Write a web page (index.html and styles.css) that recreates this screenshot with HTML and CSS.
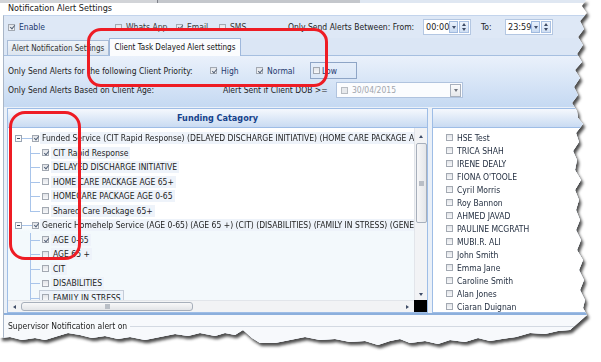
FILE: index.html
```html
<!DOCTYPE html>
<html lang="en">
<head>
  <meta charset="UTF-8">
  <title>Notification Alert Settings</title>
  <link rel="stylesheet" href="styles.css">
</head>
<body>
  <div class="shot">
    <div class="paper">
      <div class="window">
        <div class="topstrip"><span class="ts-a"></span><span class="ts-b"></span><span class="ts-c"></span></div>
        <div class="title">Notification Alert Settings</div>
        <div class="group">
          <div class="bar">
            <span class="opt w-enable"><span class="cb on"></span><span class="navy">Enable</span></span>
            <span class="opt w-wa"><span class="cb"></span>Whats App</span>
            <span class="opt w-email"><span class="cb on"></span>Email</span>
            <span class="opt w-sms"><span class="cb"></span>SMS</span>
            <span class="between">Only Send Alerts Between: From:</span>
            <span class="time"><span class="tv">00:00</span><span class="dd"><i class="tri-d"></i></span><span class="spin"><i class="tri-u"></i><i class="tri-d"></i></span></span>
            <span class="to">To:</span>
            <span class="time"><span class="tv">23:59</span><span class="dd"><i class="tri-d"></i></span><span class="spin"><i class="tri-u"></i><i class="tri-d"></i></span></span>
          </div>
          <div class="tabs">
            <span class="tab">Alert Notification Settings</span>
            <span class="tab active">Client Task Delayed Alert settings</span>
          </div>
          <div class="panel">
            <div class="prow r1">
              <span class="plabel w-prio">Only Send Alerts for the following Client Priority:</span>
              <span class="opt w-high"><span class="cb on"></span><span class="navy">High</span></span>
              <span class="opt w-normal"><span class="cb on"></span><span class="navy">Normal</span></span>
              <span class="lowbox"><span class="cb"></span><span class="navy">Low</span></span>
            </div>
            <div class="prow r2">
              <span class="plabel w-age">Only Send Alerts Based on Client Age:</span>
              <span class="plabel w-dob">Alert Sent if Client DOB &gt;=</span>
              <span class="datebox"><span class="cb"></span><span class="dv">30/04/2015</span><span class="dd dis"><i class="tri-d"></i></span></span>
            </div>
          </div>
          <div class="lists">
            <div class="box funding">
              <div class="head">Funding Catagory</div>
              <div class="body">
                <div class="tree">
                  <div class="trow parent"><span class="exp"></span><span class="stub"></span><span class="cb on"></span><span class="lbl wide">Funded Service (CIT Rapid Response) (DELAYED DISCHARGE INITIATIVE) (HOME CARE PACKAGE AGE</span></div>
                  <div class="kids">
                    <div class="trow kid"><span class="cb on"></span><span class="lbl">CIT Rapid Response</span></div>
                    <div class="trow kid"><span class="cb on"></span><span class="lbl">DELAYED DISCHARGE INITIATIVE</span></div>
                    <div class="trow kid"><span class="cb"></span><span class="lbl">HOME CARE PACKAGE AGE 65+</span></div>
                    <div class="trow kid"><span class="cb"></span><span class="lbl">HOMECARE PACKAGE AGE 0-65</span></div>
                    <div class="trow kid"><span class="cb"></span><span class="lbl">Shared Care Package 65+</span></div>
                  </div>
                  <div class="trow parent"><span class="exp"></span><span class="stub"></span><span class="cb on"></span><span class="lbl wide">Generic Homehelp Service (AGE 0-65) (AGE 65 +) (CIT) (DISABILITIES) (FAMILY IN STRESS) (GENERIC</span></div>
                  <div class="kids open">
                    <div class="trow kid"><span class="cb on"></span><span class="lbl">AGE 0-65</span></div>
                    <div class="trow kid"><span class="cb"></span><span class="lbl">AGE 65 +</span></div>
                    <div class="trow kid"><span class="cb"></span><span class="lbl">CIT</span></div>
                    <div class="trow kid"><span class="cb"></span><span class="lbl">DISABILITIES</span></div>
                    <div class="trow kid"><span class="focus"><span class="cb"></span><span class="lbl">FAMILY IN STRESS</span></span></div>
                  </div>
                </div>
                <div class="vscroll">
                  <i class="tri-u"></i>
                  <span class="vthumb"><b></b></span>
                  <span class="fill"></span>
                  <i class="tri-d"></i>
                </div>
              </div>
              <div class="hrow">
                <div class="hscroll">
                  <i class="tri-l"></i>
                  <span class="hthumb"><b></b></span>
                  <span class="fill"></span>
                  <i class="tri-r"></i>
                </div>
                <div class="corner"></div>
              </div>
            </div>
            <div class="box staff">
              <div class="head"></div>
              <div class="names">
                <div class="name"><span class="cb"></span>HSE Test</div>
                <div class="name"><span class="cb"></span>TRICA SHAH</div>
                <div class="name"><span class="cb"></span>IRENE DEALY</div>
                <div class="name"><span class="cb"></span>FIONA O'TOOLE</div>
                <div class="name"><span class="cb"></span>Cyril Morris</div>
                <div class="name"><span class="cb"></span>Roy Bannon</div>
                <div class="name"><span class="cb"></span>AHMED JAVAD</div>
                <div class="name"><span class="cb"></span>PAULINE MCGRATH</div>
                <div class="name"><span class="cb"></span>MUBI.R. ALI</div>
                <div class="name"><span class="cb"></span>John Smith</div>
                <div class="name"><span class="cb"></span>Emma Jane</div>
                <div class="name"><span class="cb"></span>Caroline Smith</div>
                <div class="name"><span class="cb"></span>Alan Jones</div>
                <div class="name"><span class="cb"></span>Ciaran Duignan</div>
              </div>
            </div>
          </div>
          <div class="foot"><span>Supervisor Notification alert on</span><span class="rule"></span></div>
        </div>
      </div>
    </div>
    <div class="mark mark-a"></div>
    <div class="mark mark-b"></div>
  </div>
</body>
</html>
```

FILE: styles.css
```css
* {
  box-sizing: border-box;
}
body {
  margin: 0;
  background: #fff;
  font-family: "DejaVu Sans Condensed", "Liberation Sans Narrow", "Liberation Sans", sans-serif;
  font-size: 8.5px;
  color: #1c1c1c;
}
.shot {
  position: relative;
  width: 601px;
  height: 362px;
  overflow: hidden;
}
.paper {
  width: 596px;
  height: 352px;
  filter: drop-shadow(2px 3px 1.5px rgba(0, 0, 0, 0.7));
}
.window {
  width: 596px;
  height: 352px;
  background: #fff;
  padding-left: 3px;
  display: flex;
  flex-direction: column;
  clip-path: polygon(0 0, 586px 0, 582px 6px, 587px 13px, 580px 21px, 584px 29px, 578px 37px, 583px 45px, 577px 54px, 582px 62px, 575px 70px, 580px 78px, 574px 87px, 578px 95px, 572px 103px, 577px 111px, 578px 118px, 583px 124px, 576px 133px, 579px 142px, 573px 151px, 577px 160px, 575px 170px, 581px 180px, 575px 190px, 579px 200px, 576px 210px, 580px 220px, 576px 230px, 581px 240px, 577px 250px, 583px 260px, 579px 270px, 584px 280px, 580px 290px, 585px 300px, 583px 308px, 587px 315px, 579px 322px, 570px 330px, 558px 331px, 545px 334px, 530px 333px, 516px 337px, 502px 339px, 490px 341px, 478px 338px, 465px 342px, 450px 340px, 438px 344px, 425px 341px, 410px 343px, 400px 339px, 390px 341px, 378px 345px, 365px 341px, 350px 342px, 335px 339px, 320px 340px, 305px 337px, 290px 340px, 275px 343px, 260px 343px, 252px 338px, 243px 330px, 235px 335px, 225px 333px, 215px 336px, 200px 333px, 188px 336px, 175px 334px, 160px 337px, 145px 340px, 130px 337px, 118px 339px, 105px 336px, 92px 338px, 80px 335px, 68px 333px, 58px 336px, 45px 340px, 35px 338px, 22px 340px, 10px 337px, 0 338px);
}

/* top */
.topstrip {
  height: 3px;
  margin-left: -3px;
  display: flex;
}
.ts-a {
  width: 157px;
  background: #d2d4d8;
}
.ts-b {
  width: 203px;
  background: #c4c7cc;
  border-left: 1px solid #7d8088;
}
.ts-c {
  flex: 1;
  background: #dfe7f2;
}
.title {
  height: 12px;
  padding-left: 5px;
  font-size: 9px;
  line-height: 11px;
  color: #1a1a1a;
}
.group {
  flex: 1;
  display: flex;
  flex-direction: column;
  border-left: 1px solid #a9b6c8;
  border-top: 1px solid #c3d4ec;
  background: #e4ecf8;
}

/* checkbox */
.cb {
  position: relative;
  flex: none;
  width: 7px;
  height: 7px;
  border: 1px solid #a3a9b2;
  background: linear-gradient(#e2e4e8, #f7f8fa);
}
.cb.on::after {
  content: "";
  position: absolute;
  left: 1.5px;
  top: -0.5px;
  width: 2px;
  height: 4px;
  border: solid #56647a;
  border-width: 0 1px 1px 0;
  transform: rotate(40deg);
}
.opt {
  display: flex;
  align-items: center;
  gap: 4px;
  flex: none;
  white-space: nowrap;
}
.navy {
  color: #1f3a70;
}

/* row 1 */
.bar {
  height: 22px;
  display: flex;
  align-items: center;
  padding-left: 4px;
  background: #dee8f6;
}
.w-enable { width: 107px; }
.w-wa { width: 61px; color: #3a3a3a; }
.w-email { width: 43px; color: #3a3a3a; }
.w-sms { width: 69px; color: #3a3a3a; }
.between {
  width: 135px;
  flex: none;
  white-space: nowrap;
}
.to {
  width: 24px;
  margin-left: 10px;
  flex: none;
}
.time {
  width: 48px;
  height: 16px;
  flex: none;
  display: flex;
  align-items: center;
  background: #fff;
  border: 1px solid #b4c7e2;
  padding: 1px;
}
.tv {
  width: 24px;
  font-size: 9px;
  padding-left: 1px;
}
.dd {
  width: 9px;
  height: 12px;
  display: flex;
  align-items: center;
  justify-content: center;
  background: linear-gradient(#e9f1fc, #c8daf2);
  border: 1px solid #9fb9de;
}
.spin {
  width: 10px;
  height: 12px;
  margin-left: 1px;
  display: flex;
  flex-direction: column;
  align-items: center;
  justify-content: space-around;
  background: linear-gradient(#eef4fc, #d1e0f4);
  border: 1px solid #a9c0e2;
}
.tri-d, .tri-u, .tri-l, .tri-r {
  display: block;
  width: 0;
  height: 0;
  border: 2.5px solid transparent;
}
.tri-d {
  border-top: 3px solid #3f4c66;
  border-bottom: 0;
}
.tri-u {
  border-bottom: 3px solid #3f4c66;
  border-top: 0;
}
.tri-l {
  border-right: 3px solid #3f4c66;
  border-left: 0;
}
.tri-r {
  border-left: 3px solid #3f4c66;
  border-right: 0;
}

/* tabs */
.tabs {
  height: 18px;
  display: flex;
  align-items: flex-end;
  padding-left: 3px;
  background: #dbe6f5;
  border-bottom: 1px solid #a6bfe0;
}
.tab {
  height: 15px;
  flex: none;
  display: flex;
  align-items: center;
  justify-content: center;
  width: 102px;
  white-space: nowrap;
  font-size: 8px;
  color: #333;
  background: linear-gradient(#f0f4f9, #dde5ef);
  border: 1px solid #a8bbd6;
  border-bottom: 0;
}
.tab.active {
  height: 18px;
  width: 132px;
  margin-bottom: -1px;
  color: #111;
  background: #fbfcfe;
  border-color: #9fb8dc;
}

/* panel */
.panel {
  height: 51px;
  padding: 6px 0 0 4px;
  display: flex;
  flex-direction: column;
  gap: 3px;
  background: linear-gradient(#eaf1fb, #c5d9f2);
}
.prow {
  display: flex;
  align-items: center;
}
.r1 { height: 17px; }
.r2 { height: 16px; }
.plabel {
  flex: none;
  white-space: nowrap;
}
.w-prio { width: 202px; }
.w-high { width: 46px; }
.w-normal { width: 54px; }
.w-age { width: 215px; }
.w-dob { width: 113px; }
.lowbox {
  width: 47px;
  height: 17px;
  display: flex;
  align-items: center;
  gap: 2px;
  padding-left: 2px;
  border: 1px solid #8ea5c6;
}
.datebox {
  width: 127px;
  height: 16px;
  display: flex;
  align-items: center;
  padding: 0 1px 0 4px;
  background: #fbfcfe;
  border: 1px solid #b0c3de;
}
.datebox .cb {
  background: #e7e9ec;
  border-color: #b8bcc2;
}
.dv {
  flex: 1;
  margin-left: 4px;
  color: #a2a6ad;
}
.dd.dis {
  width: 11px;
  height: 13px;
  background: linear-gradient(#fbfbfc, #e6e8eb);
  border-color: #a9b1bd;
}
.dd.dis .tri-d {
  border-top-color: #70757e;
}

/* lists */
.lists {
  height: 206px;
  display: flex;
  gap: 4px;
  padding: 1px 0 0 3px;
  background: #eaf0f8;
}
.box {
  height: 205px;
  display: flex;
  flex-direction: column;
  background: #fff;
  border: 1px solid #9ebde6;
}
.funding {
  width: 421px;
}
.staff {
  flex: 1;
}
.head {
  height: 19px;
  flex: none;
  display: flex;
  align-items: center;
  justify-content: center;
  font-weight: bold;
  font-size: 9px;
  color: #15428b;
  background: linear-gradient(#f5f8fd, #c9dbf2);
  border-bottom: 1px solid #9ebde6;
}
.body {
  flex: 1;
  display: flex;
  min-height: 0;
}
.tree {
  flex: 1;
  min-width: 0;
  overflow: hidden;
  padding: 3px 0 0 7px;
  background: linear-gradient(#fff 56%, #f3f9fc 60%);
}
.trow {
  height: 14.5px;
  display: flex;
  align-items: center;
  white-space: nowrap;
}
.exp {
  position: relative;
  flex: none;
  width: 7px;
  height: 7px;
  border: 1px solid #9aa5b4;
  background: #fafbfc;
}
.exp::after {
  content: "";
  position: absolute;
  left: 1px;
  top: 2px;
  width: 3px;
  height: 1px;
  background: #3a4a60;
}
.stub {
  width: 10px;
  flex: none;
  border-top: 1px solid #a8c4ea;
}
.lbl {
  padding: 1px 2px;
  margin-left: 2px;
  background: #eef3fa;
}
.lbl.wide {
  flex: 1;
  min-width: 0;
  overflow: hidden;
  margin-left: 1px;
}
.kids {
  margin-left: 15px;
}
.kid {
  position: relative;
  padding-left: 12px;
}
.kid::before {
  content: "";
  position: absolute;
  left: 0;
  top: 0;
  bottom: 0;
  border-left: 1px solid #a8c4ea;
}
.kid:last-child::before {
  bottom: auto;
  height: 110%;
}
.kids:not(.open) .kid:last-child::before {
  height: 50%;
}
.kid::after {
  content: "";
  position: absolute;
  left: 0;
  top: 50%;
  width: 10px;
  border-top: 1px solid #a8c4ea;
}
.focus {
  display: flex;
  align-items: center;
  padding: 1px 0 1px 2px;
  margin-left: -3px;
  border: 1px solid #c4ccd8;
  background: #eef3fa;
}
.vscroll {
  width: 13px;
  flex: none;
  display: flex;
  flex-direction: column;
  align-items: center;
  padding: 7px 0 4px;
  background: #f2f3f5;
  border-left: 1px solid #e2e5ea;
}
.vthumb {
  width: 11px;
  height: 80px;
  margin-top: 5px;
  display: flex;
  align-items: center;
  justify-content: center;
  border: 1px solid #a7afbb;
  border-radius: 2px;
  background: linear-gradient(90deg, #f7f7f8, #e4e6e9);
}
.vthumb b {
  width: 5px;
  height: 5px;
  background: #b9bec6;
}
.fill {
  flex: 1;
}
.hrow {
  height: 12px;
  flex: none;
  display: flex;
}
.hscroll {
  flex: 1;
  display: flex;
  align-items: center;
  padding: 0 5px 0 5px;
  background: #f2f3f5;
  border-top: 1px solid #e2e5ea;
}
.hthumb {
  width: 172px;
  height: 9px;
  margin-left: 5px;
  display: flex;
  align-items: center;
  justify-content: center;
  border: 1px solid #a7afbb;
  border-radius: 3px;
  background: linear-gradient(#f8f8f9, #e2e4e8);
}
.hthumb b {
  width: 5px;
  height: 5px;
  background: #b9bec6;
}
.corner {
  width: 13px;
  background: #000;
}
.names {
  padding: 3px 0 0 13px;
}
.name {
  height: 13px;
  display: flex;
  align-items: center;
  gap: 4px;
  color: #1e2a3c;
  white-space: nowrap;
}

/* footer */
.foot {
  flex: 1;
  display: flex;
  align-items: flex-start;
  gap: 3px;
  padding: 6px 0 0 4px;
  background: #f7f9fc;
  border-top: 2px solid #8cafdc;
}
.foot .rule {
  flex: 1;
  margin-top: 5px;
  border-top: 1px solid #d3d9e2;
}

/* annotation marks */
.mark {
  position: absolute;
  border: 3px solid #ee1c24;
}
.mark-a {
  left: 87px;
  top: 28px;
  width: 241px;
  height: 59px;
  border-radius: 14px;
}
.mark-b {
  left: 9px;
  top: 111px;
  width: 72px;
  height: 149px;
  border-radius: 16px;
}
```
